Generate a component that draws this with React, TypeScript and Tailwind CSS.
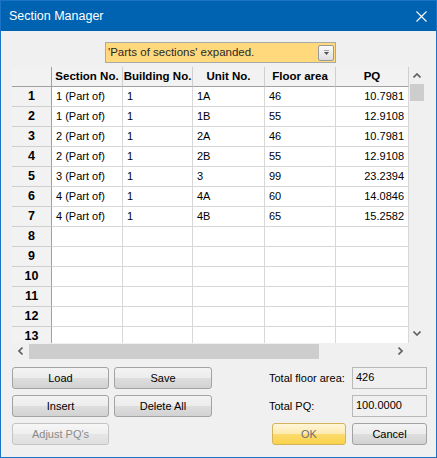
import React from "react";

const rows: string[][] = [
  ["1 (Part of)", "1", "1A", "46", "10.7981"],
  ["1 (Part of)", "1", "1B", "55", "12.9108"],
  ["2 (Part of)", "1", "2A", "46", "10.7981"],
  ["2 (Part of)", "1", "2B", "55", "12.9108"],
  ["3 (Part of)", "1", "3", "99", "23.2394"],
  ["4 (Part of)", "1", "4A", "60", "14.0846"],
  ["4 (Part of)", "1", "4B", "65", "15.2582"],
  ["", "", "", "", ""],
  ["", "", "", "", ""],
  ["", "", "", "", ""],
  ["", "", "", "", ""],
  ["", "", "", "", ""],
  ["", "", "", "", ""],
];

const headers = ["Section No.", "Building No.", "Unit No.", "Floor area", "PQ"];
const widths = ["w-[71px]", "w-[70px]", "w-[72px]", "w-[71px]", "w-[73px]"];

const btn =
  "h-[22px] rounded-[3px] border border-[#a3a3a3] bg-[linear-gradient(to_bottom,#f3f3f3_0%,#ececec_50%,#dedede_50%,#d2d2d2_100%)] text-[11px] text-black flex items-center justify-center";

function Chevron({ dir }: { dir: "up" | "down" | "left" | "right" }) {
  const paths: Record<string, string> = {
    up: "M0.5 4.5 L4 1 L7.5 4.5",
    down: "M0.5 0.5 L4 4 L7.5 0.5",
    left: "M4.5 0.5 L1 4 L4.5 7.5",
    right: "M0.5 0.5 L4 4 L0.5 7.5",
  };
  const vertical = dir === "up" || dir === "down";
  return (
    <svg
      width={vertical ? 8 : 5}
      height={vertical ? 5 : 8}
      viewBox={vertical ? "0 0 8 5" : "0 0 5 8"}
      fill="none"
    >
      <path d={paths[dir]} stroke="#606060" strokeWidth="1.6" />
    </svg>
  );
}

export default function App() {
  return (
    <div className="w-[437px] h-[458px] flex flex-col border border-[#1a73c7] bg-[#f0f0f0] font-['Liberation_Sans',Arial,sans-serif] overflow-hidden">
      {/* Title bar */}
      <div className="h-[30px] shrink-0 bg-[#0063b1] flex items-center justify-between pl-[8px] pr-[9px]">
        <span className="text-white text-[12.5px] leading-none">Section Manager</span>
        <svg width="11" height="11" viewBox="0 0 11 11">
          <path d="M0.5 0.5 L10.5 10.5 M10.5 0.5 L0.5 10.5" stroke="#ffffff" strokeWidth="1.1" />
        </svg>
      </div>

      {/* Body */}
      <div className="flex flex-col flex-1">
        {/* Dropdown */}
        <div className="mt-[11px] ml-[104px] w-[231px] h-[21px] border border-[#a9a9a9] bg-[#ffd97b] flex items-center justify-between pl-[2px] pr-[1px]">
          <span className="text-[11.5px] text-[#2a2a2a] leading-none">'Parts of sections' expanded.</span>
          <div className="w-[16px] h-[16px] rounded-[2px] border border-[#9a9a9a] bg-[linear-gradient(to_bottom,#fbfbfb,#dedede)] flex flex-col items-center justify-center gap-[1px]">
            <div className="w-[5px] h-px bg-[#a0a0a0]" />
            <svg width="5" height="3" viewBox="0 0 5 3">
              <path d="M0 0 L5 0 L2.5 3 Z" fill="#505050" />
            </svg>
          </div>
        </div>

        {/* Grid */}
        <div className="mt-[4px] ml-[11px] w-[413px] h-[292px] flex flex-col bg-white">
          <div className="flex h-[276px]">
            <div className="w-[397px] h-[276px] overflow-hidden flex flex-col">
              {/* header */}
              <div className="flex h-[20px] shrink-0">
                <div className="w-[40px] h-[20px] shrink-0 bg-[#f2f2f2] border-r border-b border-[#a0a0a0]" />
                {headers.map((h, i) => (
                  <div
                    key={h}
                    className={`${widths[i]} h-[20px] shrink-0 bg-[#f2f2f2] border-r border-r-[#cfcfcf] border-b border-b-[#a0a0a0] flex items-center justify-center text-[11.5px] font-bold text-black leading-none`}
                  >
                    {h}
                  </div>
                ))}
              </div>
              {rows.map((r, ri) => (
                <div key={ri} className="flex h-[20px] shrink-0">
                  <div className="w-[40px] h-[20px] shrink-0 bg-[#f2f2f2] border-r border-r-[#a0a0a0] border-b border-b-[#cfcfcf] flex items-center justify-center text-[12.5px] font-bold text-black leading-none">
                    {ri + 1}
                  </div>
                  {r.map((c, ci) => (
                    <div
                      key={ci}
                      className={`${widths[ci]} h-[20px] shrink-0 border-r border-b border-[#d8d8d8] flex items-center text-[11px] text-black leading-none ${
                        ci === 4 ? "justify-end pr-[4px]" : "pl-[4px]"
                      }`}
                    >
                      {c}
                    </div>
                  ))}
                </div>
              ))}
            </div>
            {/* vertical scrollbar */}
            <div className="w-[16px] h-[276px] bg-[#f0f0f0] flex flex-col">
              <div className="h-[17px] flex items-center justify-center">
                <Chevron dir="up" />
              </div>
              <div className="h-[17px] mx-px bg-[#cdcdcd]" />
              <div className="flex-1" />
              <div className="h-[17px] flex items-center justify-center pb-[2px]">
                <Chevron dir="down" />
              </div>
            </div>
          </div>
          {/* horizontal scrollbar */}
          <div className="flex h-[16px]">
            <div className="w-[397px] h-[16px] bg-[#f0f0f0] flex items-center">
              <div className="w-[17px] h-[16px] flex items-center justify-center">
                <Chevron dir="left" />
              </div>
              <div className="w-[290px] h-[15px] mt-px bg-[#cdcdcd]" />
              <div className="flex-1" />
              <div className="w-[17px] h-[16px] flex items-center justify-center">
                <Chevron dir="right" />
              </div>
            </div>
            <div className="w-[16px] h-[16px] bg-[#f0f0f0]" />
          </div>
        </div>

        {/* Bottom controls */}
        <div className="mt-[8px] flex justify-between pl-[11px] pr-[9px]">
          <div className="flex flex-col gap-[6px]">
            <div className="flex gap-[5px]">
              <div className={`${btn} w-[97px]`}>Load</div>
              <div className={`${btn} w-[98px]`}>Save</div>
            </div>
            <div className="flex gap-[5px]">
              <div className={`${btn} w-[97px]`}>Insert</div>
              <div className={`${btn} w-[98px]`}>Delete All</div>
            </div>
            <div className="w-[97px] h-[22px] rounded-[3px] border border-[#c2c4c6] bg-[linear-gradient(to_bottom,#f6f6f6_0%,#efefef_50%,#e6e6e6_50%,#dfdfdf_100%)] text-[11px] text-[#8a8a8a] flex items-center justify-center">
              Adjust PQ's
            </div>
          </div>

          <div className="flex flex-col gap-[6px] w-[158px]">
            <div className="flex items-center">
              <span className="w-[83px] text-[11px] text-black">Total floor area:</span>
              <div className="w-[75px] h-[22px] border border-[#b9b9b9] bg-[#f0f0f0] pl-[3px] pt-[3px] text-[11px] leading-[13px] text-black">
                426
              </div>
            </div>
            <div className="flex items-center">
              <span className="w-[83px] text-[11px] text-black">Total PQ:</span>
              <div className="w-[75px] h-[22px] border border-[#b9b9b9] bg-[#f0f0f0] pl-[3px] pt-[3px] text-[11px] leading-[13px] text-black">
                100.0000
              </div>
            </div>
            <div className="flex gap-[6px] ml-[3px]">
              <div className="w-[74px] h-[22px] rounded-[3px] border border-[#d3b45c] bg-[linear-gradient(to_bottom,#fff6d9_0%,#fdeab0_50%,#fbdb70_50%,#fad24a_100%)] text-[11px] text-[#6e6e6e] flex items-center justify-center">
                OK
              </div>
              <div className={`${btn} w-[75px]`}>Cancel</div>
            </div>
          </div>
        </div>
      </div>
    </div>
  );
}
